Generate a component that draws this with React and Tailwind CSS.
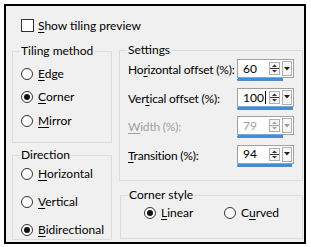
const font = { fontFamily: 'Lato, "Noto Sans", sans-serif' };

function U({ children }) {
  return <span className="underline decoration-1 underline-offset-[2px]">{children}</span>;
}

function Radio({ checked, children }) {
  return (
    <div className="flex items-center gap-[5px]">
      <span className="flex h-[12px] w-[12px] items-center justify-center rounded-full border border-[#333333] bg-white">
        {checked && <span className="h-[6px] w-[6px] rounded-full bg-[#111111]" />}
      </span>
      <span>{children}</span>
    </div>
  );
}

function Group({ title, className, children }) {
  return (
    <div className={"relative border border-[#dcdcdc] " + className}>
      <span className="absolute left-[7px] top-[-9px] bg-[#f0f0f0] px-[1px] leading-[16px]">{title}</span>
      {children}
    </div>
  );
}

function SpinArrows({ disabled }) {
  const c = disabled ? "#a0a0a0" : "#333333";
  return (
    <svg width="11" height="13" viewBox="0 0 11 13">
      <rect x="0.5" y="0.5" width="10" height="12" fill="#f4f4f4" stroke="#b0b0b0" />
      <line x1="1" y1="6.5" x2="10" y2="6.5" stroke={c} />
      <path d="M3 5 L5.5 2.5 L8 5 Z" fill={c} />
      <path d="M3 8 L5.5 10.5 L8 8 Z" fill={c} />
    </svg>
  );
}

function Spin({ value, bar, disabled, caret }) {
  const c = disabled ? "#a0a0a0" : "#000000";
  return (
    <div className="flex w-[57px] flex-col">
      <div className="flex h-[19px] items-center border border-[#a0a0a0] bg-white">
        <span className="ml-[5px] w-[26px]" style={{ color: c }}>
          {value}
          {caret && <span className="ml-[1px] inline-block h-[13px] w-[1px] translate-y-[2px] bg-black" />}
        </span>
        <SpinArrows disabled={disabled} />
        <div className="ml-[2px] flex h-[15px] w-[10px] items-center justify-center border border-[#b0b0b0] bg-[#f7f7f7]">
          <svg width="6" height="4" viewBox="0 0 6 4">
            <path d="M0 0 L6 0 L3 3.5 Z" fill={disabled ? "#a0a0a0" : "#222222"} />
          </svg>
        </div>
      </div>
      <div className="h-[3px] rounded-l-full bg-[#3a8fe3]" style={{ width: bar }} />
    </div>
  );
}

function Row({ label, children, disabled }) {
  return (
    <div className="flex h-[28.5px] items-center justify-between pl-[8px] pr-[8px]">
      <span className={"whitespace-nowrap tracking-[-0.2px] " + (disabled ? "text-[#a0a0a0]" : "")}>{label}</span>
      {children}
    </div>
  );
}

export default function App() {
  return (
    <div className="h-[247px] w-[311px] bg-white p-[4px] text-[12px] leading-[16px] text-black" style={font}>
      <div className="h-[240px] w-[302px] border-2 border-black bg-[#f0f0f0]">
        <div className="ml-[15px] mt-[13px] flex h-[13px] items-center gap-[4px]">
          <span className="h-[13px] w-[13px] border border-[#333333] bg-white" />
          <span>
            <U>S</U>how tiling preview
          </span>
        </div>
        <div className="ml-[6px] mt-[18px] flex items-start gap-[7px]">
          <div className="mt-[1px] flex w-[100px] flex-col gap-[12px]">
            <Group title="Tiling method" className="h-[92px] pl-[8px] pt-[10px]">
              <div className="flex h-[23.5px] items-center">
                <Radio>
                  <U>E</U>dge
                </Radio>
              </div>
              <div className="flex h-[23.5px] items-center">
                <Radio checked>
                  <U>C</U>orner
                </Radio>
              </div>
              <div className="flex h-[23.5px] items-center">
                <Radio>
                  <U>M</U>irror
                </Radio>
              </div>
            </Group>
            <Group title="Direction" className="h-[85px] pl-[8px] pt-[4px]">
              <div className="flex h-[28px] items-center">
                <Radio>
                  <U>H</U>orizontal
                </Radio>
              </div>
              <div className="flex h-[28px] items-center">
                <Radio>
                  <U>V</U>ertical
                </Radio>
              </div>
              <div className="flex h-[28px] items-center">
                <Radio checked>
                  <U>B</U>idirectional
                </Radio>
              </div>
            </Group>
          </div>
          <div className="flex w-[184px] flex-col gap-[14px]">
            <Group title="Settings" className="h-[131px] pt-[5px]">
              <Row
                label={
                  <>
                    Ho<U>r</U>izontal offset (%):
                  </>
                }
              >
                <Spin value="60" bar="46px" />
              </Row>
              <Row
                label={
                  <>
                    Ver<U>t</U>ical offset (%):
                  </>
                }
              >
                <Spin value="100" bar="56px" caret />
              </Row>
              <Row
                disabled
                label={
                  <>
                    <U>W</U>idth (%):
                  </>
                }
              >
                <Spin value="79" bar="46px" disabled />
              </Row>
              <Row
                label={
                  <>
                    <U>T</U>ransition (%):
                  </>
                }
              >
                <Spin value="94" bar="55px" />
              </Row>
            </Group>
            <Group title="Corner style" className="ml-[1px] flex h-[44px] items-start pl-[23px] pt-[9px]">
              <div className="w-[80px]">
                <Radio checked>
                  <U>L</U>inear
                </Radio>
              </div>
              <Radio>
                C<U>u</U>rved
              </Radio>
            </Group>
          </div>
        </div>
      </div>
    </div>
  );
}
